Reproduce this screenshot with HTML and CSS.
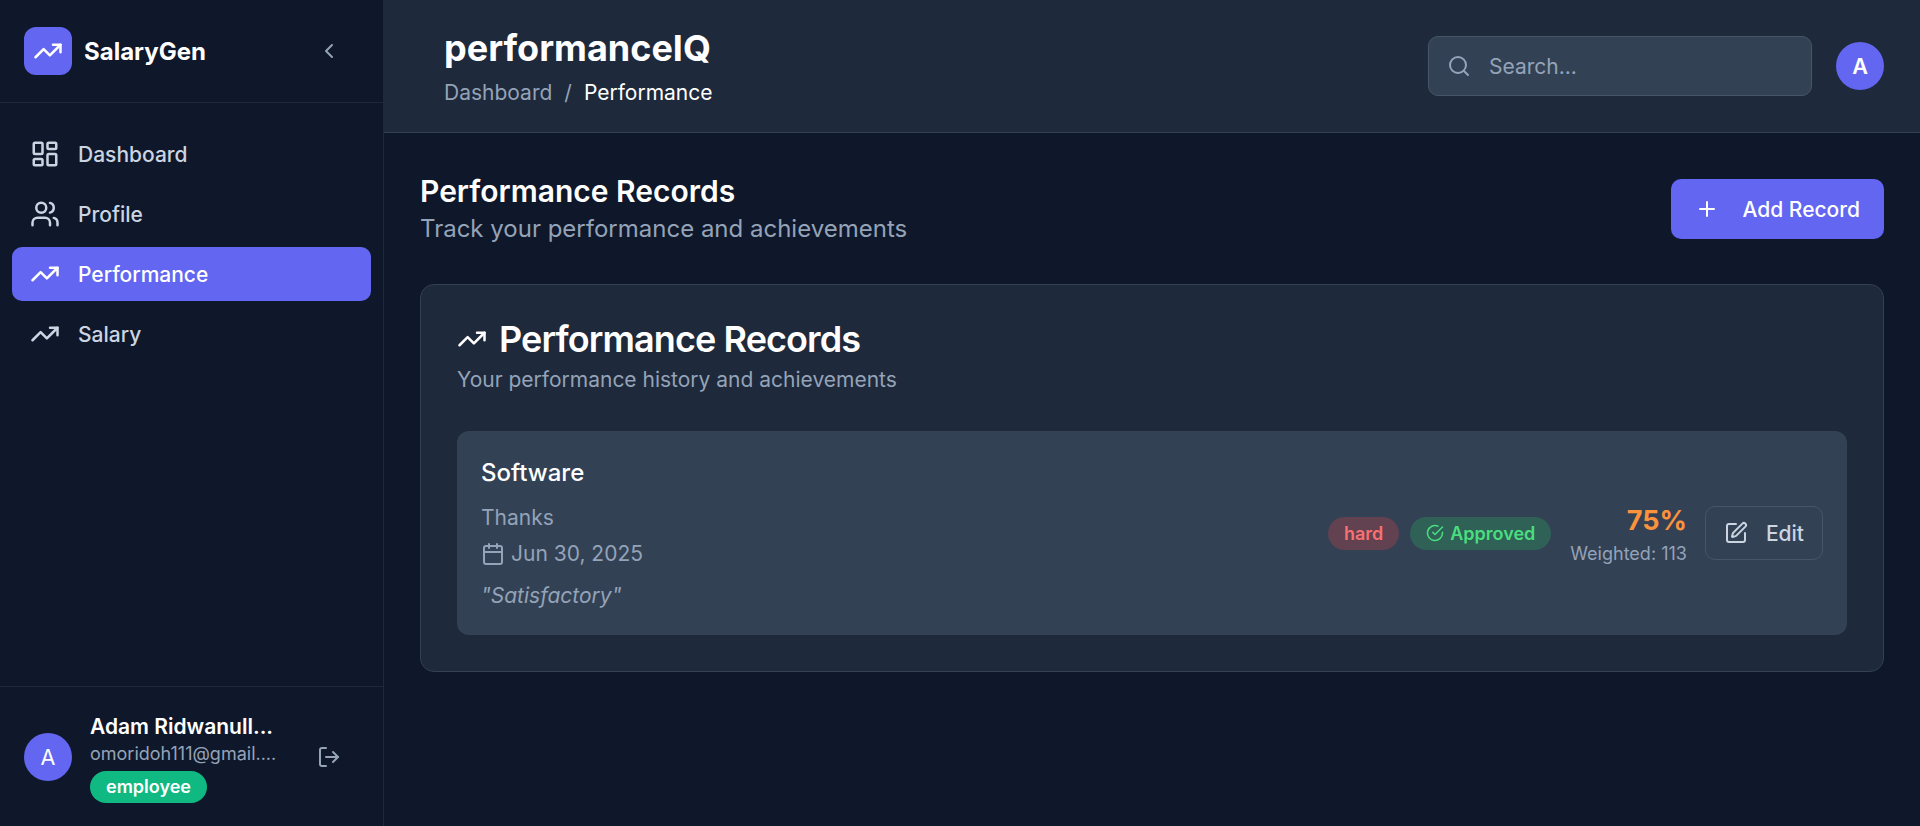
FILE: index.html
```html
<!doctype html>
<html lang="en">
<head>
    <meta charset="utf-8">
    <meta name="viewport" content="width=device-width, initial-scale=1">
    <title>performanceIQ</title>
    <link rel="stylesheet" href="styles.css">
</head>
<body>
    <svg class="sprite" aria-hidden="true">
        <symbol id="i-trend" viewBox="0 0 24 24"><polyline points="22 7 13.5 15.5 8.5 10.5 2 17"/><polyline points="16 7 22 7 22 13"/></symbol>
        <symbol id="i-dash" viewBox="0 0 24 24"><rect width="7" height="9" x="3" y="3" rx="1"/><rect width="7" height="5" x="14" y="3" rx="1"/><rect width="7" height="9" x="14" y="12" rx="1"/><rect width="7" height="5" x="3" y="16" rx="1"/></symbol>
        <symbol id="i-users" viewBox="0 0 24 24"><path d="M16 21v-2a4 4 0 0 0-4-4H6a4 4 0 0 0-4 4v2"/><circle cx="9" cy="7" r="4"/><path d="M22 21v-2a4 4 0 0 0-3-3.87"/><path d="M16 3.13a4 4 0 0 1 0 7.75"/></symbol>
        <symbol id="i-chevron" viewBox="0 0 24 24"><path d="m15 18-6-6 6-6"/></symbol>
        <symbol id="i-logout" viewBox="0 0 24 24"><path d="M9 21H5a2 2 0 0 1-2-2V5a2 2 0 0 1 2-2h4"/><polyline points="16 17 21 12 16 7"/><line x1="21" y1="12" x2="9" y2="12"/></symbol>
        <symbol id="i-search" viewBox="0 0 24 24"><circle cx="11" cy="11" r="8"/><path d="m21 21-4.3-4.3"/></symbol>
        <symbol id="i-plus" viewBox="0 0 24 24"><path d="M5 12h14"/><path d="M12 5v14"/></symbol>
        <symbol id="i-calendar" viewBox="0 0 24 24"><path d="M8 2v4"/><path d="M16 2v4"/><rect width="18" height="18" x="3" y="4" rx="2"/><path d="M3 10h18"/></symbol>
        <symbol id="i-check" viewBox="0 0 24 24"><path d="M22 11.08V12a10 10 0 1 1-5.93-9.14"/><path d="m9 11 3 3L22 4"/></symbol>
        <symbol id="i-edit" viewBox="0 0 24 24"><path d="M12 3H5a2 2 0 0 0-2 2v14a2 2 0 0 0 2 2h14a2 2 0 0 0 2-2v-7"/><path d="M18.375 2.625a1 1 0 0 1 3 3l-9.013 9.014a2 2 0 0 1-.853.505l-2.873.84a.5.5 0 0 1-.62-.62l.84-2.873a2 2 0 0 1 .506-.852z"/></symbol>
    </svg>

    <div class="app">
        <aside class="sidebar">
            <div class="brand">
                <span class="brand-logo"><svg class="icon icon-30"><use href="#i-trend"/></svg></span>
                <span class="brand-name">SalaryGen</span>
                <svg class="icon icon-24 brand-toggle"><use href="#i-chevron"/></svg>
            </div>

            <nav class="nav">
                <a class="nav-item"><svg class="icon icon-30"><use href="#i-dash"/></svg>Dashboard</a>
                <a class="nav-item"><svg class="icon icon-30"><use href="#i-users"/></svg>Profile</a>
                <a class="nav-item active"><svg class="icon icon-30"><use href="#i-trend"/></svg>Performance</a>
                <a class="nav-item"><svg class="icon icon-30"><use href="#i-trend"/></svg>Salary</a>
            </nav>

            <div class="user">
                <span class="avatar">A</span>
                <div class="user-info">
                    <div class="user-name">Adam Ridwanull...</div>
                    <div class="user-mail">omoridoh111@gmail....</div>
                    <span class="role">employee</span>
                </div>
                <svg class="icon icon-24 user-logout"><use href="#i-logout"/></svg>
            </div>
        </aside>

        <div class="main">
            <header class="topbar">
                <div class="topbar-title">
                    <h1>performanceIQ</h1>
                    <div class="crumbs"><span>Dashboard</span><span>/</span><span class="crumb-now">Performance</span></div>
                </div>
                <div class="search">
                    <svg class="icon icon-24"><use href="#i-search"/></svg>
                    <span>Search...</span>
                </div>
                <span class="avatar avatar-top">A</span>
            </header>

            <main class="content">
                <div class="page-head">
                    <div>
                        <h2>Performance Records</h2>
                        <p>Track your performance and achievements</p>
                    </div>
                    <button class="btn-add"><svg class="icon icon-24"><use href="#i-plus"/></svg>Add Record</button>
                </div>

                <section class="card">
                    <h3><svg class="icon icon-30"><use href="#i-trend"/></svg>Performance Records</h3>
                    <p class="card-sub">Your performance history and achievements</p>

                    <div class="record">
                        <div class="record-main">
                            <h4>Software</h4>
                            <div class="record-line">Thanks</div>
                            <div class="record-line record-date"><svg class="icon icon-24"><use href="#i-calendar"/></svg>Jun 30, 2025</div>
                            <div class="record-note">"Satisfactory"</div>
                        </div>
                        <div class="record-side">
                            <span class="pill pill-red">hard</span>
                            <span class="pill pill-green"><svg class="icon icon-18"><use href="#i-check"/></svg>Approved</span>
                            <div class="score">
                                <div class="score-num">75%</div>
                                <div class="score-sub">Weighted: 113</div>
                            </div>
                            <button class="btn-edit"><svg class="icon icon-24"><use href="#i-edit"/></svg>Edit</button>
                        </div>
                    </div>
                </section>
            </main>
        </div>
    </div>
</body>
</html>
```

FILE: styles.css
```css
*,
*::before,
*::after {
    box-sizing: border-box;
    margin: 0;
    padding: 0;
}

body {
    background-color: #0f172a;
    color: #fff;
    font-family: "Inter", sans-serif;
    height: 826px;
    overflow: hidden;
}

.sprite {
    display: none;
}

.icon {
    fill: none;
    flex-shrink: 0;
    stroke: currentColor;
    stroke-linecap: round;
    stroke-linejoin: round;
    stroke-width: 2;
}

.icon-30 { height: 30px; width: 30px; }
.icon-24 { height: 24px; width: 24px; }
.icon-18 { height: 18px; width: 18px; }

.app {
    display: flex;
    height: 826px;
}

/*
 * Sidebar
 */

.sidebar {
    border-right: 1px solid #1e293b;
    display: flex;
    flex-direction: column;
    flex-shrink: 0;
    width: 384px;
}

.brand {
    align-items: center;
    border-bottom: 1px solid #1e293b;
    display: flex;
    gap: 12px;
    height: 103px;
    padding: 0 24px;
}

.brand-logo {
    align-items: center;
    background-color: #6366f1;
    border-radius: 12px;
    display: flex;
    height: 48px;
    justify-content: center;
    width: 48px;
}

.brand-name {
    font-size: 24px;
    font-weight: 700;
}

.brand-toggle {
    color: #94a3b8;
    margin-left: auto;
    margin-right: 18px;
}

.nav {
    display: flex;
    flex-direction: column;
    gap: 6px;
    padding: 24px 12px;
}

.nav-item {
    align-items: center;
    border-radius: 10px;
    color: #cbd5e1;
    display: flex;
    font-size: 21px;
    font-weight: 500;
    gap: 18px;
    height: 54px;
    padding: 0 18px;
}

.nav-item.active {
    background-color: #6366f1;
    color: #fff;
}

.user {
    align-items: center;
    border-top: 1px solid #1e293b;
    display: flex;
    gap: 18px;
    height: 140px;
    margin-top: auto;
    padding: 0 24px;
}

.avatar {
    align-items: center;
    background-color: #6366f1;
    border-radius: 50%;
    display: flex;
    flex-shrink: 0;
    font-size: 21.6px;
    font-weight: 400;
    height: 48px;
    justify-content: center;
    width: 48px;
}

.avatar-top {
    font-weight: 600;
}

.user-info {
    padding-top: 3px;
    width: 186px;
}

.user-name {
    font-size: 21px;
    font-weight: 600;
    white-space: nowrap;
}

.user-mail {
    color: #94a3b8;
    font-size: 18px;
    line-height: 25px;
    margin-top: 2px;
    white-space: nowrap;
}

.role {
    background-color: #10b981;
    border-radius: 16px;
    display: inline-block;
    font-size: 18px;
    font-weight: 600;
    line-height: 32px;
    margin-top: 5px;
    padding: 0 16px;
}

.user-logout {
    color: #94a3b8;
    margin-left: 23px;
}

/*
 * Top bar
 */

.main {
    display: flex;
    flex: 1;
    flex-direction: column;
    min-width: 0;
}

.topbar {
    align-items: center;
    background-color: #1e293b;
    border-bottom: 1px solid #334155;
    display: flex;
    height: 133px;
    padding: 0 36px 0 60px;
}

.topbar-title {
    margin-right: auto;
}

h1 {
    font-size: 36px;
    font-weight: 700;
    line-height: 48px;
}

.crumbs {
    color: #94a3b8;
    display: flex;
    font-size: 21px;
    gap: 12px;
    line-height: 30px;
    margin-top: 6px;
}

.crumb-now {
    color: #fff;
}

.search {
    align-items: center;
    background-color: #334155;
    border: 1px solid #475569;
    border-radius: 10px;
    color: #94a3b8;
    display: flex;
    font-size: 21px;
    gap: 18px;
    height: 60px;
    margin-right: 24px;
    padding: 0 18px;
    width: 384px;
}

/*
 * Content
 */

.content {
    padding: 40px 36px;
}

.page-head {
    align-items: flex-start;
    display: flex;
    justify-content: space-between;
    margin-bottom: 37px;
}

h2 {
    font-size: 30px;
    font-weight: 600;
    line-height: 36px;
}

.page-head p {
    color: #94a3b8;
    font-size: 24px;
    line-height: 36px;
    margin-top: 2px;
}

.btn-add {
    align-items: center;
    background-color: #6366f1;
    border: 0;
    border-radius: 10px;
    color: #fff;
    display: flex;
    font-family: inherit;
    font-size: 21px;
    font-weight: 500;
    gap: 24px;
    height: 60px;
    margin-top: 6px;
    padding: 0 24px;
}

.card {
    background-color: #1e293b;
    border: 1px solid #334155;
    border-radius: 14px;
    padding: 36px;
}

h3 {
    align-items: center;
    display: flex;
    font-size: 36px;
    font-weight: 600;
    gap: 12px;
    letter-spacing: -0.025em;
    line-height: 36px;
}

.card-sub {
    color: #94a3b8;
    font-size: 21px;
    line-height: 30px;
    margin-top: 8px;
}

.record {
    align-items: center;
    background-color: #334155;
    border-radius: 12px;
    display: flex;
    justify-content: space-between;
    margin-top: 36px;
    padding: 24px;
}

h4 {
    font-size: 24px;
    font-weight: 500;
    line-height: 36px;
}

.record-line {
    color: #94a3b8;
    font-size: 21px;
    line-height: 30px;
    margin-top: 12px;
}

.record-date {
    align-items: center;
    display: flex;
    gap: 6px;
    margin-top: 6px;
}

.record-note {
    color: #94a3b8;
    font-size: 21px;
    font-style: italic;
    line-height: 30px;
    margin-top: 12px;
}

.record-side {
    align-items: center;
    display: flex;
}

.pill {
    align-items: center;
    border-radius: 17px;
    display: flex;
    font-size: 18px;
    font-weight: 600;
    gap: 6px;
    height: 33px;
    padding: 0 16px;
}

.pill-red {
    background-color: rgba(239, 68, 68, 0.25);
    color: #f87171;
    margin-right: 11px;
}

.pill-green {
    background-color: rgba(34, 197, 94, 0.25);
    color: #4ade80;
}

.score {
    margin-left: 19px;
    margin-top: 6px;
    text-align: right;
}

.score-num {
    color: #fb923c;
    font-size: 27px;
    font-weight: 700;
    line-height: 36px;
}

.score-sub {
    color: #94a3b8;
    font-size: 18px;
    line-height: 30px;
}

.btn-edit {
    align-items: center;
    background: none;
    border: 1px solid #475569;
    border-radius: 10px;
    color: #cbd5e1;
    display: flex;
    font-family: inherit;
    font-size: 21px;
    font-weight: 500;
    gap: 18px;
    height: 54px;
    margin-left: 18px;
    padding: 0 18px;
}
```
